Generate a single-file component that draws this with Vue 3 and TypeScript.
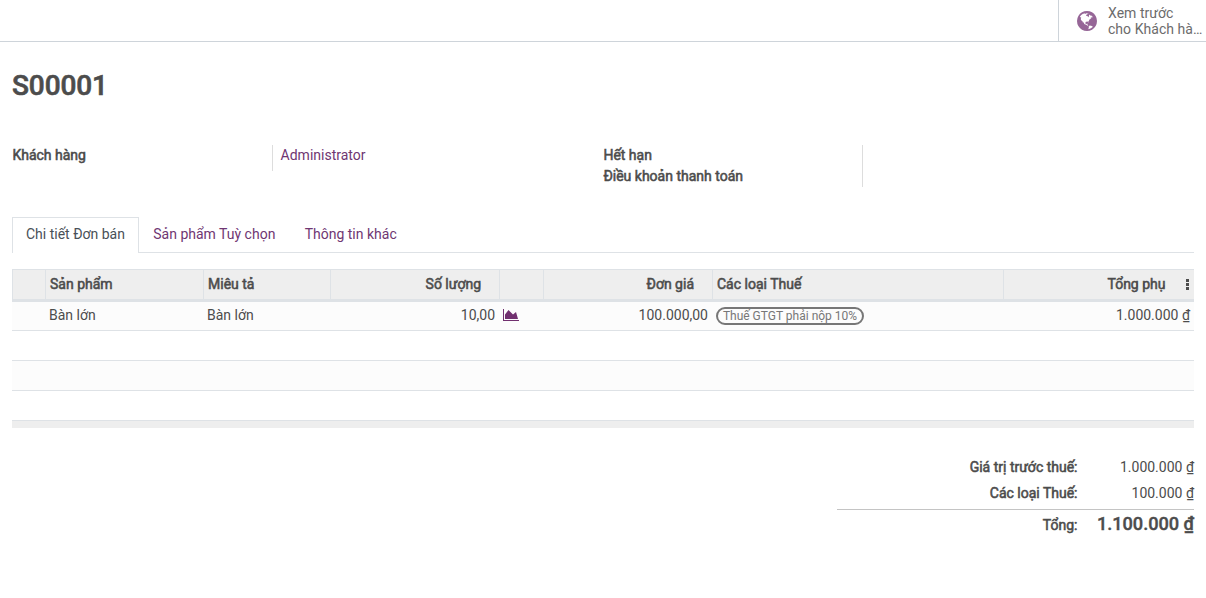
<template>
  <div class="form-view">
    <div class="button-box">
      <button class="stat-button" type="button">
        <svg class="globe" viewBox="0 128 1536 1536" aria-hidden="true">
          <path :d="globePath" />
        </svg>
        <span class="stat-text">
          <span>Xem trước</span>
          <span>cho Khách hà…</span>
        </span>
      </button>
    </div>

    <main class="sheet">
      <h1 class="title">S00001</h1>

      <div class="groups">
        <div class="group">
          <div class="labels"><label class="strong">Khách hàng</label></div>
          <div class="values single"><a href="#" @click.prevent>Administrator</a></div>
        </div>
        <div class="group">
          <div class="labels">
            <label class="strong">Hết hạn</label>
            <label class="strong">Điều khoản thanh toán</label>
          </div>
          <div class="values"></div>
        </div>
      </div>

      <nav class="tabs">
        <a
          v-for="(tab, index) in tabs"
          :key="tab"
          href="#"
          class="tab"
          :class="{ active: index === activeTab }"
          @click.prevent="activeTab = index"
          >{{ tab }}</a
        >
      </nav>

      <table class="lines">
        <colgroup>
          <col v-for="(column, index) in columns" :key="index" :style="{ width: `${column.width}px` }" />
        </colgroup>
        <thead>
          <tr>
            <th v-for="(column, index) in columns" :key="index" :class="{ number: column.numeric }">
              <span class="strong">{{ column.label }}</span>
              <svg v-if="index === columns.length - 1" class="kebab" viewBox="0 0 3 11">
                <path d="M0 0h3v3H0zM0 4h3v3H0zM0 8h3v3H0z" />
              </svg>
            </th>
          </tr>
        </thead>
        <tbody>
          <tr v-for="line in orderLines" :key="line.product">
            <td></td>
            <td>{{ line.product }}</td>
            <td>{{ line.description }}</td>
            <td class="number">{{ line.quantity }}</td>
            <td>
              <svg class="chart" viewBox="0 128 2048 1536">
                <path
                  d="M2048 1536v128h-2048v-1536h128v1408h1920zM1664 512l256 896h-1664v-576l448-576 576 576z"
                />
              </svg>
            </td>
            <td class="number">{{ line.price }}</td>
            <td><span class="badge">{{ line.tax }}</span></td>
            <td class="number">{{ line.subtotal }}</td>
          </tr>
          <tr v-for="n in 3" :key="`empty-${n}`">
            <td :colspan="columns.length"></td>
          </tr>
        </tbody>
        <tfoot>
          <tr>
            <td :colspan="columns.length"></td>
          </tr>
        </tfoot>
      </table>

      <div class="totals">
        <div v-for="total in totals" :key="total.label" class="total-row" :class="{ grand: total.grand }">
          <span class="total-label strong">{{ total.label }}</span>
          <span class="total-value">{{ total.value }}</span>
        </div>
      </div>
    </main>
  </div>
</template>

<script setup lang="ts">
import { ref } from 'vue'

interface Column {
  label: string
  width: number
  numeric?: boolean
}

interface OrderLine {
  product: string
  description: string
  quantity: string
  price: string
  tax: string
  subtotal: string
}

interface Total {
  label: string
  value: string
  grand?: boolean
}

const activeTab = ref(0)
const tabs = ['Chi tiết Đơn bán', 'Sản phẩm Tuỳ chọn', 'Thông tin khác']

const columns: Column[] = [
  { label: '', width: 33 },
  { label: 'Sản phẩm', width: 158 },
  { label: 'Miêu tả', width: 127 },
  { label: 'Số lượng', width: 169, numeric: true },
  { label: '', width: 44 },
  { label: 'Đơn giá', width: 169, numeric: true },
  { label: 'Các loại Thuế', width: 291 },
  { label: 'Tổng phụ', width: 191, numeric: true },
]

const orderLines: OrderLine[] = [
  {
    product: 'Bàn lớn',
    description: 'Bàn lớn',
    quantity: '10,00',
    price: '100.000,00',
    tax: 'Thuế GTGT phải nộp 10%',
    subtotal: '1.000.000 ₫',
  },
]

const totals: Total[] = [
  { label: 'Giá trị trước thuế:', value: '1.000.000 ₫' },
  { label: 'Các loại Thuế:', value: '100.000 ₫' },
  { label: 'Tổng:', value: '1.100.000 ₫', grand: true },
]

const globePath =
  'M768 128q209 0 385.5 103t279.5 279.5 103 385.5-103 385.5-279.5 279.5-385.5 103-385.5-103-279.5-279.5-103-385.5 103-385.5 279.5-279.5 385.5-103zm274 521q-2 1-9.5 9.5t-13.5 9.5q2 0 4.5-5t5-11 3.5-7q6-7 22-15 14-6 52-12 34-8 51 11-2-2 9.5-13t14.5-12q3-2 15-4.5t15-7.5l2-22q-12 1-17.5-7t-6.5-21q0 2-6 8 0-7-4.5-8t-11.5 1-9 1q-10-3-15-7.5t-8-16.5-4-15q-2-5-9.5-10.5t-9.5-10.5q-1-2-2.5-5.5t-3-6.5-4-5.5-5.5-2.5-7 5-7.5 10-4.5 5q-3-2-6-1.5t-4.5 1-4.5 3-5 3.5q-3 2-8.5 3t-8.5 2q15-5-1-11-10-4-16-3 9-4 7.5-12t-8.5-14h5q-1-4-8.5-8.5t-17.5-8.5-13-6q-8-5-34-9.5t-33-.5q-5 6-4.5 10.5t4 14 3.5 12.5q1 6-5.5 13t-6.5 12q0 7 14 15.5t10 21.5q-3 8-16 16t-16 12q-5 8-1.5 18.5t10.5 16.5q2 2 1.5 4t-3.5 4.5-5.5 4-6.5 3.5l-3 2q-11 5-20.5-6t-13.5-26q-7-25-16-30-23-8-29 1-5-13-41-26-25-9-58-4 6-1 0-15-7-15-19-12 3-6 4-17.5t1-13.5q3-13 12-23 1-1 7-8.5t9.5-13.5.5-6q35 4 50-11 5-5 11.5-17t10.5-17q9-6 14-5.5t14.5 5.5 14.5 5q14 1 15.5-11t-7.5-20q12 1 3-17-5-7-8-9-12-4-27 5-8 4 2 8-1-1-9.5 10.5t-16.5 17.5-16-5q-1-1-5.5-13.5t-9.5-13.5q-8 0-16 15 3-8-11-15t-24-8q19-12-8-27-7-4-20.5-5t-19.5 4q-5 7-5.5 11.5t5 8 10.5 5.5 11.5 4 8.5 3q14 10 8 14-2 1-8.5 3.5t-11.5 4.5-6 4q-3 4 0 14t-2 14q-5-5-9-17.5t-7-16.5q7 9-25 6l-10-1q-4 0-16 2t-20.5 1-13.5-8q-4-8 0-20 1-4 4-2-4-3-11-9.5t-10-8.5q-46 15-94 41 6 1 12-1 5-2 13-6.5t10-5.5q34-14 42-7l5-5q14 16 20 25-7-4-30-1-20 6-22 12 7 12 5 18-4-3-11.5-10t-14.5-11-15-5q-16 0-22 1-146 80-235 222 7 7 12 8 4 1 5 9t2.5 11 11.5-3q9 8 3 19 1-1 44 27 19 17 21 21 3 11-10 18-1-2-9-9t-9-4q-3 5 .5 18.5t10.5 12.5q-7 0-9.5 16t-2.5 35.5-1 23.5l2 1q-3 12 5.5 34.5t21.5 19.5q-13 3 20 43 6 8 8 9 3 2 12 7.5t15 10 10 10.5q4 5 10 22.5t14 23.5q-2 6 9.5 20t10.5 23q-1 0-2.5 1t-2.5 1q3 7 15.5 14t15.5 13q1 3 2 10t3 11 8 2q2-20-24-62-15-25-17-29-3-5-5.5-15.5t-4.5-14.5q2 0 6 1.5t8.5 3.5 7.5 4 2 3q-3 7 2 17.5t12 18.5 17 19 12 13q6 6 14 19.5t0 13.5q9 0 20 10.5t17 19.5q5 8 8 26t5 24q2 7 8.5 13.5t12.5 9.5l16 8 13 7q5 2 18.5 10.5t21.5 11.5q10 4 16 4t14.5-2.5 13.5-3.5q15-2 29 15t21 21q36 19 55 11-2 1 .5 7.5t8 15.5 9 14.5 5.5 8.5q5 6 18 15t18 15q6-4 7-9-3 8 7 20t18 10q14-3 14-32-31 15-49-18 0-1-2.5-5.5t-4-8.5-2.5-8.5 0-7.5 5-3q9 0 10-3.5t-2-12.5-4-13q-1-8-11-20t-12-15q-5 9-16 8t-16-9q0 1-1.5 5.5t-1.5 6.5q-13 0-15-1 1-3 2.5-17.5t3.5-22.5q1-4 5.5-12t7.5-14.5 4-12.5-4.5-9.5-17.5-2.5q-19 1-26 20-1 3-3 10.5t-5 11.5-9 7q-7 3-24 2t-24-5q-13-8-22.5-29t-9.5-37q0-10 2.5-26.5t3-25-5.5-24.5q3-2 9-9.5t10-10.5q2-1 4.5-1.5t4.5 0 4-1.5 3-6q-1-1-4-3-3-3-4-3 7 3 28.5-1.5t27.5 1.5q15 11 22-2 0-1-2.5-9.5t-.5-13.5q5 27 29 9 3 3 15.5 5t17.5 5q3 2 7 5.5t5.5 4.5 5-.5 8.5-6.5q10 14 12 24 11 40 19 44 7 3 11 2t4.5-9.5 0-14-1.5-12.5l-1-8v-18l-1-8q-15-3-18.5-12t1.5-18.5 15-18.5q1-1 8-3.5t15.5-6.5 12.5-8q21-19 15-35 7 0 11-9-1 0-5-3t-7.5-5-4.5-2q9-5 2-16 5-3 7.5-11t7.5-10q9 12 21 2 7-8 1-16 5-7 20.5-10.5t18.5-9.5q7 2 8-2t1-12 3-12q4-5 15-9t13-5l17-11q3-4 0-4 18 2 31-11 10-11-6-20 3-6-3-9.5t-15-5.5q3-1 11.5-.5t10.5-1.5q15-10-7-16-17-5-43 12zm-163 877q206-36 351-189-3-3-12.5-4.5t-12.5-3.5q-18-7-24-8 1-7-2.5-13t-8-9-12.5-8-11-7q-2-2-7-6t-7-5.5-7.5-4.5-8.5-2-10 1l-3 1q-3 1-5.5 2.5t-5.5 3-4 3 0 2.5q-21-17-36-22-5-1-11-5.5t-10.5-7-10-1.5-11.5 7q-5 5-6 15t-2 13q-7-5 0-17.5t2-18.5q-3-6-10.5-4.5t-12 4.5-11.5 8.5-9 6.5-8.5 5.5-8.5 7.5q-3 4-6 12t-5 11q-2-4-11.5-6.5t-9.5-5.5q2 10 4 35t5 38q7 31-12 48-27 25-29 40-4 22 12 26 0 7-8 20.5t-7 21.5q0 6 2 16z'
</script>

<style>
body {
  background: #fff;
}
</style>

<style scoped>
.form-view {
  height: 598px;
  overflow: hidden;
  color: #4c4c4c;
  font-family: Roboto, 'Noto Sans', sans-serif;
  font-size: 14px;
  line-height: 21px;
}

.form-view * {
  box-sizing: border-box;
}

a {
  color: #6f3672;
  text-decoration: none;
}

/* Emphasis keeps the advance widths of the regular face */
.strong {
  font-weight: 400;
  -webkit-text-stroke: 0.55px currentColor;
}

.button-box {
  display: flex;
  justify-content: flex-end;
  height: 42px;
  border-bottom: 1px solid #ced4da;
}

.stat-button {
  display: flex;
  align-items: center;
  width: 148px;
  padding: 0 0 0 18px;
  border: 0;
  border-left: 1px solid #ced4da;
  background: none;
  color: #6c6c6c;
  font: inherit;
  line-height: 16px;
  text-align: left;
}

.globe {
  flex: none;
  width: 20px;
  height: 20px;
  margin: 1px 11px 0 0;
  fill: #966697;
}

.stat-text {
  display: flex;
  flex-direction: column;
  letter-spacing: 0.04px;
  white-space: nowrap;
}

.sheet {
  padding: 26px 12px 0;
}

.title {
  margin: 0;
  font-size: 28px;
  font-weight: 500;
  letter-spacing: -0.1px;
  line-height: 36px;
  -webkit-text-stroke: 0.6px currentColor;
}

.groups {
  display: flex;
  align-items: flex-start;
  margin-top: 41px;
  height: 72px;
}

.group {
  display: flex;
  width: 591px;
}

.group:last-child {
  width: 590px;
}

.labels {
  display: flex;
  flex-direction: column;
  width: 260px;
  padding-left: 0.4px;
}

.group:last-child .labels {
  width: 259px;
}

.values {
  padding-left: 7.6px;
  border-left: 1px solid #ddd;
}

.values.single {
  height: 26px;
}

.tabs {
  display: flex;
  height: 36px;
  border-bottom: 1px solid #dee2e6;
}

.tab {
  height: 36px;
  padding: 6px 13.3px;
  border: 1px solid transparent;
  border-bottom: 0;
  white-space: nowrap;
}

.tab.active {
  width: 127px;
  padding: 6px 13px;
  border-color: #dee2e6;
  background: #fff;
  color: #495057;
}

.tab:last-child {
  padding-left: 14px;
}

.lines {
  width: 1182px;
  margin-top: 16px;
  border-collapse: separate;
  border-spacing: 0;
  table-layout: fixed;
}

th {
  height: 33px;
  padding: 0 4px;
  border: solid #dee2e6;
  border-width: 1px 0 3px 1px;
  background: #eee;
  text-align: left;
  line-height: 29px;
}

th.number {
  padding-right: 18px;
  text-align: right;
}

th:last-child {
  padding-right: 4px;
}

.kebab {
  width: 3px;
  height: 11px;
  margin: 0 1px 0 17px;
  vertical-align: -1px;
  fill: #4c4c4c;
}

th.number .kebab {
  margin-left: 20.5px;
}

th.number:last-child {
  padding-right: 4px;
}

td {
  height: 30px;
  padding: 0 4px;
  border-bottom: 1px solid #dee2e6;
  line-height: 20px;
}

tbody tr:first-child td {
  height: 29px;
  padding-bottom: 2px;
}

tbody tr:nth-child(odd) td {
  background: #fcfcfc;
}

.number {
  text-align: right;
}

.chart {
  display: block;
  width: 16px;
  height: 12px;
  fill: #71306f;
}

.badge {
  display: block;
  width: 148px;
  height: 18px;
  margin-top: 2px;
  border: 2px solid #777;
  border-radius: 9px;
  color: #777;
  font-size: 12px;
  line-height: 14px;
  text-align: center;
  white-space: nowrap;
}

tfoot td {
  height: 7px;
  padding: 0;
  border: 0;
  background: #eee;
}

.totals {
  width: 357px;
  margin: 26px 0 0 auto;
}

.total-row {
  display: flex;
  justify-content: flex-end;
  height: 26px;
  line-height: 26px;
}

.total-value {
  width: 116.5px;
  text-align: right;
}

.total-row.grand {
  height: 30px;
  margin-top: 3px;
  border-top: 1px solid #c4c4c4;
}

.total-row.grand .total-label {
  line-height: 30px;
}

.grand .total-value {
  font-size: 18.2px;
  font-weight: 500;
  letter-spacing: -0.04px;
  line-height: 27px;
  -webkit-text-stroke: 0.4px currentColor;
}
</style>
